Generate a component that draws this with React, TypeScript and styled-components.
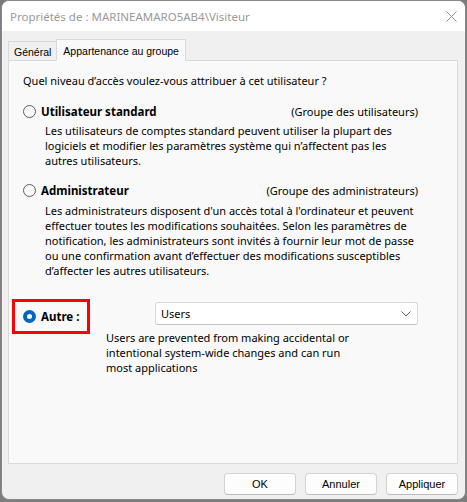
import styled, { createGlobalStyle } from "styled-components";

const GlobalStyle = createGlobalStyle`
  html, body {
    margin: 0;
    padding: 0;
    background: #7c7c7c;
  }
  body {
    font-family: "Noto Sans", "Open Sans", sans-serif;
    font-size: 11px;
    color: #000;
  }
`;

const Window = styled.div`
  box-sizing: border-box;
  width: 465px;
  height: 500px;
  margin-left: 1px;
  display: flex;
  flex-direction: column;
  background: #f0f0f0;
  border: 1px solid #8a8a8a;
  border-radius: 8px;
  overflow: hidden;
`;

const TitleBar = styled.div`
  height: 30px;
  flex-shrink: 0;
  display: flex;
  align-items: center;
  justify-content: space-between;
  background: #ffffff;
  padding-left: 8px;
`;

const Title = styled.span`
  color: #9a9a9a;
  font-size: 11.5px;
`;

const CloseButton = styled.div`
  width: 28px;
  height: 30px;
  display: flex;
  align-items: center;
  justify-content: center;
`;

const Body = styled.div`
  flex: 1;
  display: flex;
  flex-direction: column;
  padding: 7px 7px 0 6px;
`;

const TabStrip = styled.div`
  display: flex;
  align-items: flex-end;
  height: 22px;
  position: relative;
  z-index: 1;
  font-family: "Liberation Sans", Arial, sans-serif;
  font-size: 10.5px;
`;

const Tab = styled.div<{ $active?: boolean }>`
  box-sizing: border-box;
  height: ${(p) => (p.$active ? "22px" : "19px")};
  padding: ${(p) => (p.$active ? "1px 6px 0 6px" : "1px 5px 0 5px")};
  margin-left: ${(p) => (p.$active ? "-1px" : "0")};
  background: ${(p) => (p.$active ? "#f9f9f9" : "#f0f0f0")};
  border: 1px solid #d9d9d9;
  border-bottom: ${(p) => (p.$active ? "1px solid #f9f9f9" : "none")};
  margin-bottom: ${(p) => (p.$active ? "-1px" : "0")};
  display: flex;
  align-items: center;
  white-space: nowrap;
`;

const Panel = styled.div`
  box-sizing: border-box;
  height: 404px;
  background: #f9f9f9;
  border: 1px solid #d9d9d9;
  padding: 12px 39px 0 14px;
  display: flex;
  flex-direction: column;
`;

const Line = styled.div`
  line-height: 15px;
  white-space: nowrap;
`;

const OptionRow = styled.div<{ $gap: number }>`
  display: flex;
  align-items: center;
  justify-content: space-between;
  margin-top: ${(p) => p.$gap}px;
  line-height: 15px;
`;

const OptionLabel = styled.label`
  display: flex;
  align-items: center;
  gap: 5px;
  font-weight: 700;
  font-size: 11.5px;
`;

const GroupName = styled.span`
  white-space: nowrap;
`;

const Description = styled.div<{ $indent: number; $gap: number }>`
  margin-left: ${(p) => p.$indent}px;
  margin-top: ${(p) => p.$gap}px;
`;

const Radio = styled.span<{ $checked?: boolean }>`
  box-sizing: border-box;
  width: 13px;
  height: 13px;
  border-radius: 50%;
  flex-shrink: 0;
  border: ${(p) => (p.$checked ? "4px solid #0067c0" : "1px solid #5d5d5d")};
  background: ${(p) => (p.$checked ? "#ffffff" : "#f9f9f9")};
`;

const OtherSection = styled.div`
  display: flex;
  align-items: flex-start;
  margin-top: 21px;
  margin-left: -11px;
`;

const Highlight = styled.div`
  box-sizing: border-box;
  width: 78px;
  height: 35px;
  border: 3px solid #ff0000;
  padding-left: 8px;
  display: flex;
  align-items: center;
`;

const OtherColumn = styled.div`
  margin-left: 16px;
  margin-top: 3px;
  display: flex;
  flex-direction: column;
`;

const Select = styled.div`
  box-sizing: border-box;
  width: 263px;
  height: 23px;
  margin-left: 49px;
  background: #ffffff;
  border: 1px solid #d7d7d7;
  border-bottom-color: #c2c2c2;
  border-radius: 3px;
  display: flex;
  align-items: center;
  justify-content: space-between;
  padding: 0 6px 0 5px;
`;

const Footer = styled.div`
  display: flex;
  justify-content: flex-end;
  gap: 9px;
  padding-top: 9px;
`;

const Button = styled.button`
  box-sizing: border-box;
  width: 72px;
  height: 22px;
  background: #fdfdfd;
  border: 1px solid #d3d3d3;
  border-bottom-color: #bdbdbd;
  border-radius: 4px;
  font-family: "Liberation Sans", Arial, sans-serif;
  font-size: 11px;
  color: #000;
  padding: 0;
`;

const standardLines = [
  "Les utilisateurs de comptes standard peuvent utiliser la plupart des",
  "logiciels et modifier les paramètres système qui n’affectent pas les",
  "autres utilisateurs.",
];

const adminLines = [
  "Les administrateurs disposent d'un accès total à l'ordinateur et peuvent",
  "effectuer toutes les modifications souhaitées. Selon les paramètres de",
  "notification, les administrateurs sont invités à fournir leur mot de passe",
  "ou une confirmation avant d’effectuer des modifications susceptibles",
  "d’affecter les autres utilisateurs.",
];

const usersLines = [
  "Users are prevented from making accidental or",
  "intentional system-wide changes and can run",
  "most applications",
];

function CloseIcon() {
  return (
    <svg width="11" height="11" viewBox="0 0 11 11">
      <path d="M0.5 0.5 L10.5 10.5 M10.5 0.5 L0.5 10.5" stroke="#8f8f8f" strokeWidth="1" />
    </svg>
  );
}

function Chevron() {
  return (
    <svg width="10" height="6" viewBox="0 0 10 6">
      <path d="M0.5 0.5 L5 5 L9.5 0.5" fill="none" stroke="#5f5f5f" strokeWidth="1" />
    </svg>
  );
}

export default function App() {
  return (
    <>
      <GlobalStyle />
      <Window>
        <TitleBar>
          <Title>Propriétés de : MARINEAMARO5AB4\Visiteur</Title>
          <CloseButton>
            <CloseIcon />
          </CloseButton>
        </TitleBar>
        <Body>
          <TabStrip>
            <Tab>Général</Tab>
            <Tab $active>Appartenance au groupe</Tab>
          </TabStrip>
          <Panel>
            <Line>Quel niveau d’accès voulez-vous attribuer à cet utilisateur ?</Line>

            <OptionRow $gap={16}>
              <OptionLabel>
                <Radio />
                Utilisateur standard
              </OptionLabel>
              <GroupName>(Groupe des utilisateurs)</GroupName>
            </OptionRow>
            <Description $indent={22} $gap={4}>
              {standardLines.map((l) => (
                <Line key={l}>{l}</Line>
              ))}
            </Description>

            <OptionRow $gap={15}>
              <OptionLabel>
                <Radio />
                Administrateur
              </OptionLabel>
              <GroupName>(Groupe des administrateurs)</GroupName>
            </OptionRow>
            <Description $indent={22} $gap={5}>
              {adminLines.map((l) => (
                <Line key={l}>{l}</Line>
              ))}
            </Description>

            <OtherSection>
              <Highlight>
                <OptionLabel>
                  <Radio $checked />
                  Autre :
                </OptionLabel>
              </Highlight>
              <OtherColumn>
                <Select>
                  <span>Users</span>
                  <Chevron />
                </Select>
                <Description $indent={0} $gap={5}>
                  {usersLines.map((l) => (
                    <Line key={l}>{l}</Line>
                  ))}
                </Description>
              </OtherColumn>
            </OtherSection>
          </Panel>
          <Footer>
            <Button>OK</Button>
            <Button>Annuler</Button>
            <Button>Appliquer</Button>
          </Footer>
        </Body>
      </Window>
    </>
  );
}
